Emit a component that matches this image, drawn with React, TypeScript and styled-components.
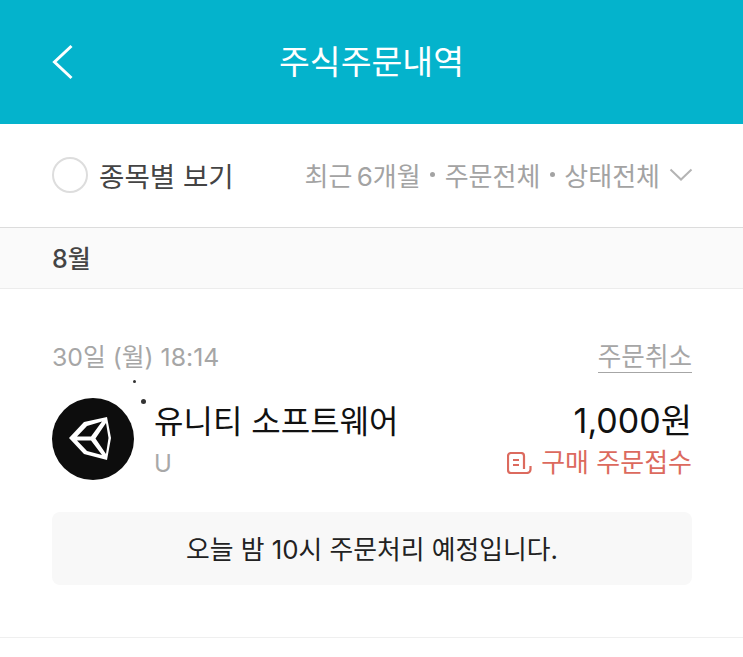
import React from 'react'
import styled, { createGlobalStyle } from 'styled-components'

const GlobalStyle = createGlobalStyle`
	html, body {
		margin: 0;
		padding: 0;
		background: #fff;
	}
	body {
		font-family: 'Inter', 'Noto Sans CJK KR', sans-serif;
	}
`

const Page = styled.div`
	position: relative;
	width: 743px;
	height: 657px;
	overflow: hidden;
	background: #fff;
`

const Header = styled.header`
	position: relative;
	display: flex;
	align-items: center;
	justify-content: center;
	height: 124px;
	background: #04b3cc;
`

const BackButton = styled.button`
	position: absolute;
	left: 52px;
	top: 44px;
	width: 22px;
	height: 36px;
	padding: 0;
	border: 0;
	background: transparent;
`

const Title = styled.h1`
	margin: 2px 0 0;
	font-size: 33.5px;
	font-weight: 400;
	line-height: 1;
	color: #fff;
`

const FilterBar = styled.div`
	display: flex;
	align-items: center;
	justify-content: space-between;
	height: 101px;
	padding: 0 50px 2px 52px;
	border-bottom: 1px solid #dcdcdc;
`

const Toggle = styled.div`
	display: flex;
	align-items: center;
	gap: 11px;
`

const Radio = styled.span`
	width: 32px;
	height: 32px;
	border: 2px solid #dddddd;
	border-radius: 50%;
`

const ToggleLabel = styled.span`
	font-size: 27.6px;
	color: #444;
`

const Filters = styled.div`
	display: flex;
	align-items: center;
	gap: 9px;
	font-size: 26px;
	word-spacing: -3px;
	color: #a3a3a3;
`

const FilterItem = styled.span`
	display: flex;
	align-items: center;
`

const Dot = styled.span`
	width: 5px;
	height: 5px;
	margin: 0 9.5px;
	border-radius: 50%;
	background: #a3a3a3;
`

const MonthBand = styled.div`
	display: flex;
	align-items: center;
	height: 57px;
	padding: 0 0 3px 52px;
	background: #fafafa;
	border-bottom: 1px solid #ececec;
	font-size: 25px;
	font-weight: 500;
	color: #444;
`

const Order = styled.section`
	padding: 52px 51px 52px 52px;
	border-bottom: 1px solid #efefef;
`

const TopRow = styled.div`
	display: flex;
	align-items: flex-start;
	justify-content: space-between;
	height: 36px;
`

const DateText = styled.span`
	font-size: 24.8px;
	line-height: 33px;
	color: #a6a6a6;
`

const CancelLink = styled.span`
	margin-top: 1px;
	font-size: 25.6px;
	line-height: 30px;
	color: #a6a6a6;
	border-bottom: 1px solid #a6a6a6;
`

const StockRow = styled.div`
	display: flex;
	align-items: center;
	gap: 20px;
	margin-top: 21px;
`

const Logo = styled.div`
	display: flex;
	align-items: center;
	justify-content: center;
	flex: none;
	width: 82px;
	height: 82px;
	border-radius: 50%;
	background: #0d0d0d;
`

const StockInfo = styled.div`
	flex: 1;
	display: flex;
	flex-direction: column;
`

const StockName = styled.div`
	font-size: 32px;
	line-height: 48px;
	color: #111;
`

const Ticker = styled.div`
	margin: 1px 0 -1px;
	font-size: 24px;
	line-height: 34px;
	color: #a8a8a8;
`

const AmountBox = styled.div`
	display: flex;
	flex-direction: column;
	align-items: flex-end;
	gap: 2px;
`

const Amount = styled.div`
	font-size: 34px;
	line-height: 46px;
	color: #111;
`

const Status = styled.div`
	display: flex;
	align-items: center;
	gap: 9px;
	font-size: 26px;
	line-height: 34px;
	color: #dc6a5e;
`

const Notice = styled.div`
	display: flex;
	align-items: center;
	justify-content: center;
	height: 70px;
	padding-bottom: 3px;
	margin-top: 32px;
	border-radius: 8px;
	background: #f8f8f8;
	font-size: 25.8px;
	color: #222;
`

const Speck = styled.span<{ $x: number; $y: number; $size: number }>`
	position: absolute;
	left: ${(p) => p.$x}px;
	top: ${(p) => p.$y}px;
	width: ${(p) => p.$size}px;
	height: ${(p) => p.$size}px;
	border-radius: 50%;
	background: #333;
`

const BackIcon = () => (
	<svg width="22" height="36" viewBox="0 0 22 36" fill="none">
		<path d="M19.5 2 L2.5 18 L19.5 34" stroke="#fff" strokeWidth="3" />
	</svg>
)

const Chevron = () => (
	<svg width="24" height="14" viewBox="0 0 24 14" fill="none">
		<path d="M1.5 1.5 L12 11.5 L22.5 1.5" stroke="#b4b4b4" strokeWidth="2" />
	</svg>
)

const UnityMark = () => (
	<svg width="82" height="82" viewBox="0 0 82 82">
		<path
			fill="#fff"
			fillRule="evenodd"
			d="M17 40 L32 24 L55 19 L59 40 L55 62 L32 56 Z M25 38.5 L35 28 L50 23.5 L39 38.5 Z M54 25 L56.5 40 L54 56 L43.5 40.5 Z M25 42.5 L39 42.5 L50 57 L35 53 Z"
		/>
	</svg>
)

const ReceiptIcon = () => (
	<svg width="25" height="22" viewBox="0 0 25 22" fill="none">
		<path
			d="M14 1 H4 a3 3 0 0 0 -3 3 V18 a3 3 0 0 0 3 3 H20 a3.5 3.5 0 0 0 3.5 -3.5 V14 M14 1 a3 3 0 0 1 3 3 V17 M6 8 h6 M6 13 h6"
			stroke="#dc6a5e"
			strokeWidth="2.2"
		/>
	</svg>
)

export default function App() {
	return (
		<Page>
			<GlobalStyle />
			<Header>
				<BackButton>
					<BackIcon />
				</BackButton>
				<Title>주식주문내역</Title>
			</Header>
			<FilterBar>
				<Toggle>
					<Radio />
					<ToggleLabel>종목별 보기</ToggleLabel>
				</Toggle>
				<Filters>
					<FilterItem>
						최근 6개월
						<Dot />
						주문전체
						<Dot />
						상태전체
					</FilterItem>
					<Chevron />
				</Filters>
			</FilterBar>
			<MonthBand>8월</MonthBand>
			<Order>
				<TopRow>
					<DateText>30일 (월) 18:14</DateText>
					<CancelLink>주문취소</CancelLink>
				</TopRow>
				<StockRow>
					<Logo>
						<UnityMark />
					</Logo>
					<StockInfo>
						<StockName>유니티 소프트웨어</StockName>
						<Ticker>U</Ticker>
					</StockInfo>
					<AmountBox>
						<Amount>1,000원</Amount>
						<Status>
							<ReceiptIcon />
							구매 주문접수
						</Status>
					</AmountBox>
				</StockRow>
				<Notice>오늘 밤 10시 주문처리 예정입니다.</Notice>
			</Order>
			<Speck $x={133} $y={380} $size={3} />
			<Speck $x={141} $y={399} $size={5} />
		</Page>
	)
}
